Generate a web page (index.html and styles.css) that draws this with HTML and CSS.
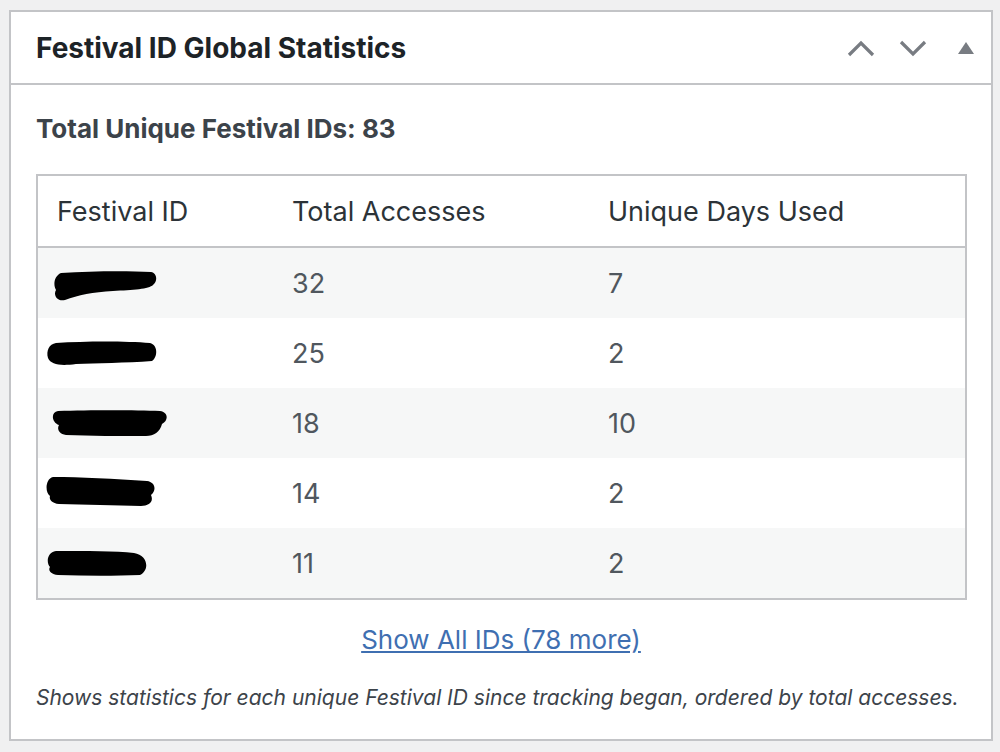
FILE: index.html
```html
<!DOCTYPE html>
<html>
<head>
<meta charset="utf-8">
<link rel="stylesheet" href="styles.css">
</head>
<body>
<div class="postbox">
  <div class="postbox-header">
    <h2 class="title">Festival ID Global Statistics</h2>
    <div class="handle-actions">
      <button class="handle-btn" aria-label="Move up">
        <svg width="28" height="18" viewBox="0 0 28 18"><path d="M2 16 L14 4 L26 16" fill="none" stroke="#787c82" stroke-width="3.2"/></svg>
      </button>
      <button class="handle-btn" aria-label="Move down">
        <svg width="28" height="18" viewBox="0 0 28 18"><path d="M2 3 L14 15 L26 3" fill="none" stroke="#787c82" stroke-width="3.2"/></svg>
      </button>
      <button class="handle-btn toggle" aria-label="Toggle panel">
        <svg width="16" height="12" viewBox="0 0 16 12"><path d="M8 0 L16 12 L0 12 Z" fill="#787c82"/></svg>
      </button>
    </div>
  </div>
  <div class="inside">
    <p class="total">Total Unique Festival IDs: 83</p>
    <table class="stats">
      <thead>
        <tr><th class="c1">Festival ID</th><th class="c2">Total Accesses</th><th class="c3">Unique Days Used</th></tr>
      </thead>
      <tbody>
        <tr class="alt"><td><svg class="redact r1" width="104" height="30" viewBox="0 0 104 30" preserveAspectRatio="none"><path d="M8 2 C40 0 75 0 98 1 C104 2 105 10 100 14 C96 18 80 19 60 20 C40 21 25 24 12 29 C4 31 0 24 3 19 C0 14 1 5 8 2 Z" fill="#000"/></svg></td><td>32</td><td>7</td></tr>
        <tr><td><svg class="redact r2" width="112" height="26" viewBox="0 0 112 26" preserveAspectRatio="none"><path d="M10 2 C40 0 80 0 104 2 C112 4 112 16 106 20 C80 22 50 22 30 23 C15 25 5 24 2 17 C0 10 3 3 10 2 Z" fill="#000"/></svg></td><td>25</td><td>2</td></tr>
        <tr class="alt"><td><svg class="redact r3" width="118" height="27" viewBox="0 0 118 27" preserveAspectRatio="none"><path d="M8 1 C40 0 85 0 110 1 C118 2 119 10 112 14 C110 22 104 26 96 26 C70 26 40 26 16 25 C8 24 7 18 9 15 C1 12 1 2 8 1 Z" fill="#000"/></svg></td><td>18</td><td>10</td></tr>
        <tr><td><svg class="redact r4" width="111" height="31" viewBox="0 0 111 31" preserveAspectRatio="none"><path d="M8 1 C35 1 70 3 102 5 C110 6 112 14 106 19 C109 26 104 30 96 30 C70 29 40 29 14 28 C6 27 4 23 5 20 C0 17 0 3 8 1 Z" fill="#000"/></svg></td><td>14</td><td>2</td></tr>
        <tr class="alt"><td><svg class="redact r5" width="102" height="26" viewBox="0 0 102 26" preserveAspectRatio="none"><path d="M10 1 C40 1 70 1 88 3 C102 5 104 20 94 25 C70 26 40 26 12 25 C4 24 2 20 4 17 C0 13 1 2 10 1 Z" fill="#000"/></svg></td><td>11</td><td>2</td></tr>
      </tbody>
    </table>
    <p class="more"><a href="#">Show All IDs (78 more)</a></p>
    <p class="desc">Shows statistics for each unique Festival ID since tracking began, ordered by total accesses.</p>
  </div>
</div>
</body>
</html>
```

FILE: styles.css
```css
html, body {
  margin: 0;
  padding: 0;
  background: #f0f0f1;
}
body {
  padding: 10px 7px 11px 9px;
  font-family: Inter, "Liberation Sans", sans-serif;
  color: #3c434a;
}
.postbox {
  background: #fff;
  border: 2px solid #c3c4c7;
  height: 731px;
  box-sizing: border-box;
}
.postbox-header {
  display: flex;
  align-items: center;
  justify-content: space-between;
  height: 71px;
  border-bottom: 2px solid #c3c4c7;
  padding: 0 16px 0 25px;
}
.title {
  margin: 0;
  font-size: 28px;
  font-weight: 700;
  color: #1d2327;
}
.handle-actions {
  display: flex;
  align-items: center;
  gap: 24px;
  padding-right: 1px;
}
.handle-btn {
  border: 0;
  background: none;
  padding: 0;
  display: flex;
  align-items: center;
}
.handle-btn.toggle { margin-left: 7px; }
.inside {
  padding: 28px 25px 0 25px;
}
.total {
  margin: 0 0 29px;
  font-size: 26px;
  font-weight: 700;
  color: #3c434a;
  line-height: 32px;
}
.stats {
  width: 931px;
  border: 2px solid #c3c4c7;
  border-collapse: collapse;
  font-size: 27px;
  color: #2c3338;
}
.stats th {
  font-weight: 400;
  text-align: left;
  height: 70px;
  padding: 0 19px;
  border-bottom: 2px solid #c3c4c7;
}
.stats td {
  height: 70px;
  padding: 0 19px;
  color: #50575e;
}
.c1 { width: 197px; }
.c2 { width: 278px; }
.stats tr.alt td { background: #f6f7f7; }
.stats td:first-child { padding-left: 0; }
.redact { display: block; }
.r1 { margin-left: 15px; margin-top: 6px; }
.r2 { margin-left: 8px; margin-top: 2px; }
.r3 { margin-left: 12px; }
.r4 { margin-left: 7px; margin-top: -3px; }
.r5 { margin-left: 8px; }
.more {
  text-align: center;
  margin: 24px 0 0;
  font-size: 26px;
  line-height: 32px;
}
.more a { color: #3f6fb1; }
.desc {
  margin: 29px 0 0;
  font-size: 21px;
  font-style: italic;
  color: #3c434a;
}
```
